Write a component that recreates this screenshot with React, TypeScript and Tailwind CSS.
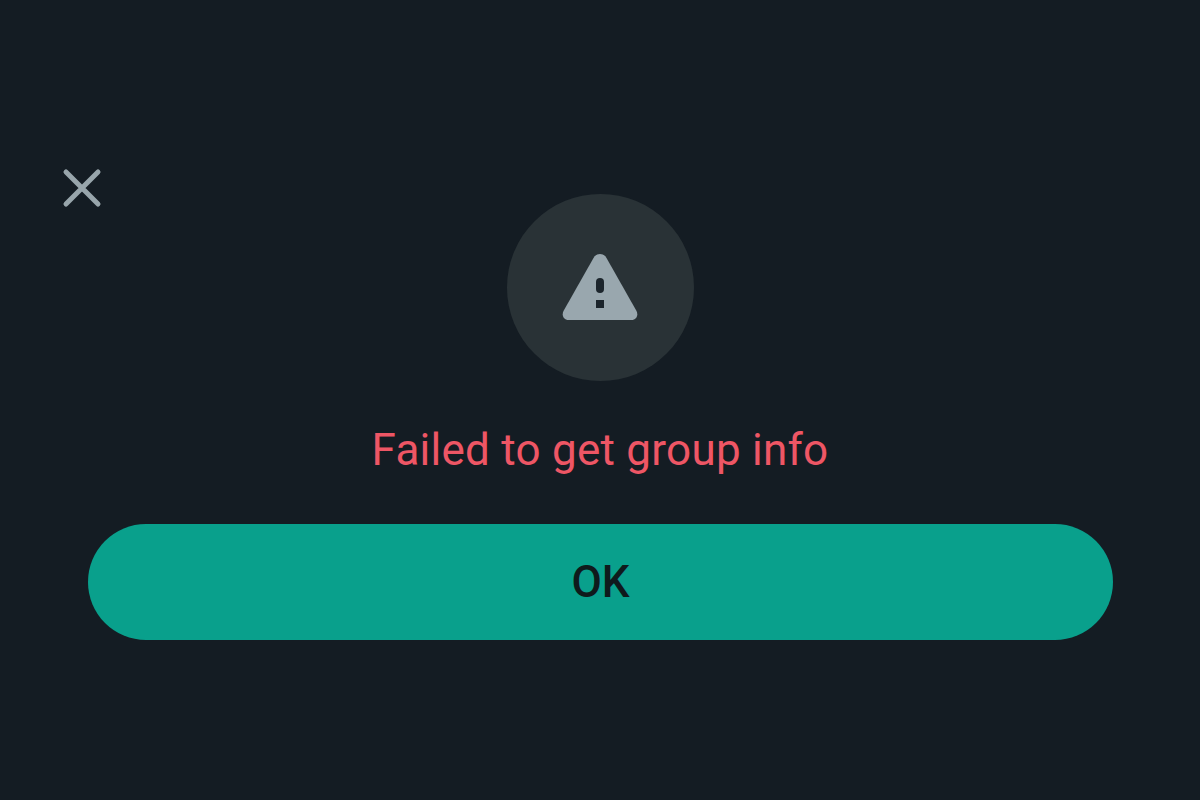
export default function App() {
  return (
    <div
      className="flex h-screen w-full flex-col bg-[#141c23] px-[88px] pt-[168px]"
      style={{ fontFamily: "Roboto, sans-serif" }}
    >
      {/* Close */}
      <button className="-mb-[14px] -ml-[26px] h-[40px] w-[40px] self-start text-[#98a5ab]">
        <svg viewBox="0 0 40 40" className="h-[40px] w-[40px]" fill="none" stroke="currentColor" strokeWidth="5" strokeLinecap="round">
          <path d="M4 4L36 36M36 4L4 36" />
        </svg>
      </button>

      {/* Warning */}
      <div className="flex h-[187px] w-[187px] items-center justify-center self-center rounded-full bg-[#293236]">
        <svg viewBox="0 0 76 68" className="mb-[1px] h-[68px] w-[76px]">
          <path
            d="M38 1C35 1 33 2.500 31.500 5L1.500 58C-0.500 62 1.500 67 6.500 67L69.500 67C74.500 67 76.500 62 74.500 58L44.500 5C43 2.500 41 1 38 1Z"
            fill="#99a7ae"
          />
          <rect x="34" y="25" width="8" height="15" rx="4" fill="#1c252c" />
          <rect x="34" y="47" width="8" height="8" fill="#1c252c" />
        </svg>
      </div>

      <p className="mt-[45px] text-center text-[44px] leading-[48px] tracking-[0.25px] text-[#ee5665]">
        Failed to get group info
      </p>

      <button className="mt-[50px] h-[116px] w-[1025px] rounded-full bg-[#09a08c] text-[44px] font-medium text-[#0f1a1c]">
        OK
      </button>
    </div>
  );
}
